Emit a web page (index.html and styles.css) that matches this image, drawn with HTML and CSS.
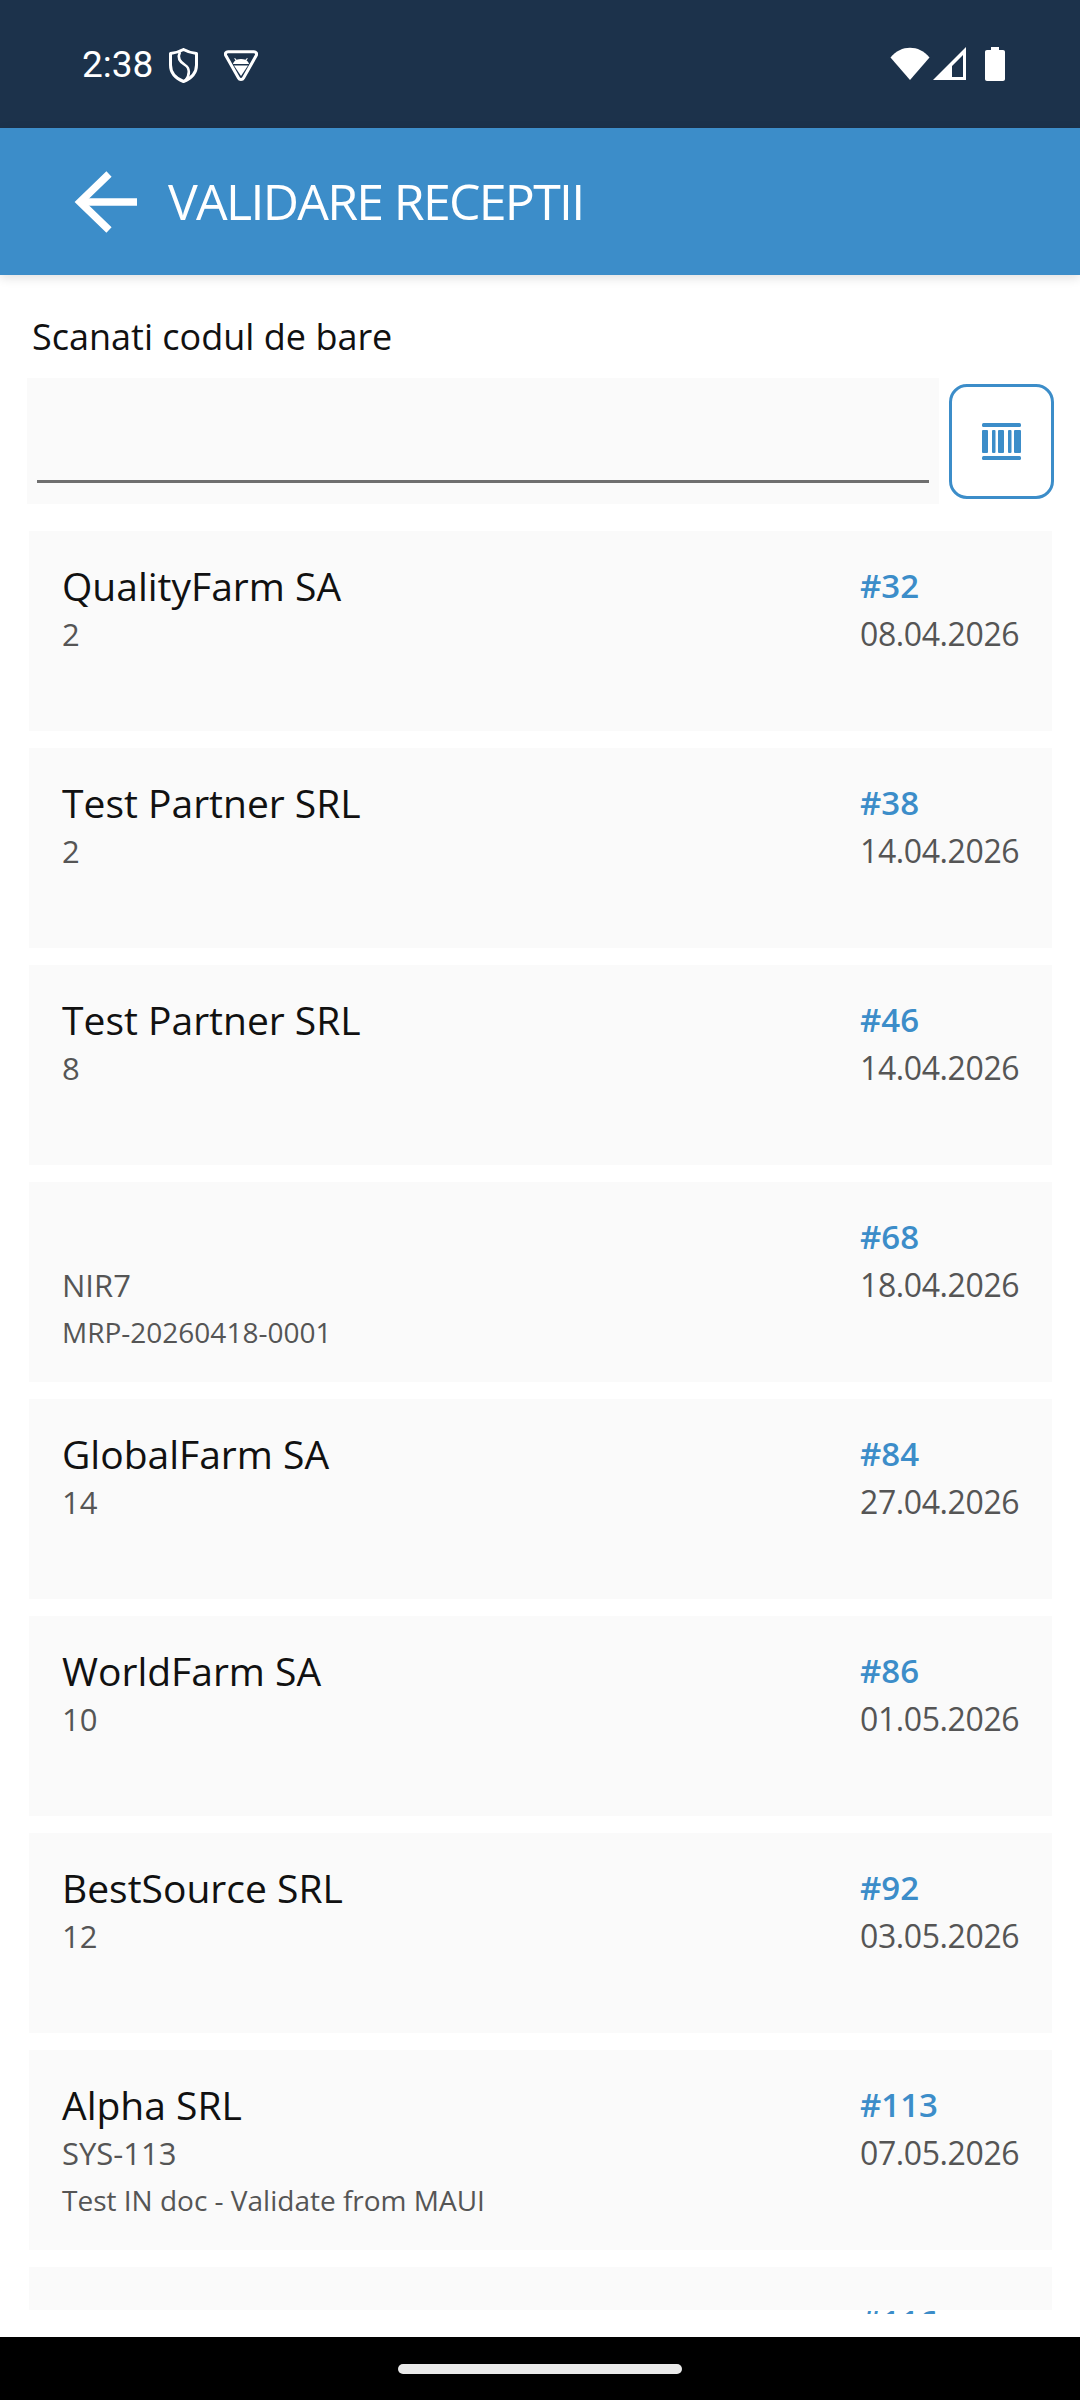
FILE: index.html
```html
<!DOCTYPE html>
<html lang="ro">

<head>
    <meta charset="UTF-8">
    <meta name="viewport" content="width=device-width, initial-scale=1.0">
    <title>Validare receptii</title>
    <link rel="stylesheet" href="styles.css">
</head>

<body>
    <div class="status-bar">
        <div class="status-left">
            <span class="status-time">2:38</span>
            <svg class="icon-shield" viewBox="0 0 29 35" fill="none" stroke="#fff" stroke-width="3" stroke-linejoin="round">
                <path d="M14.5 1.5 C18 3.5 23 5 27.5 5.5 V17 C27.5 25 22 30.5 14.5 33.5 C7 30.5 1.5 25 1.5 17 V5.5 C6 5 11 3.5 14.5 1.5 Z" />
                <path d="M11 4 C8 10 11 14 16 17 C21 20 21 27 16.5 32.5" stroke-width="2.6" />
            </svg>
            <svg class="icon-android" viewBox="0 0 34 31" fill="none">
                <path d="M4 1.7 H30 C32 1.7 33.2 3.5 32.2 5.5 L19.5 28 C18.5 30 15.5 30 14.5 28 L1.8 5.5 C0.8 3.5 2 1.7 4 1.7 Z" stroke="#fff" stroke-width="3" />
                <path d="M11 8 L12.5 9.8 C15.5 8.6 18.5 8.6 21.5 9.8 L23 8 L23.8 8.6 L22.5 10.4 C24 11.4 24.8 12.6 25 14 H9 C9.2 12.6 10 11.4 11.5 10.4 L10.2 8.6 Z" fill="#fff" />
                <path d="M10 15.5 H24 L17 26 Z" fill="#fff" />
            </svg>
        </div>
        <div class="status-right">
            <svg class="icon-wifi" viewBox="0 0 40 33" fill="#fff">
                <path d="M0.5 10.5 C11 -2.5 29 -2.5 39.5 10.5 L20 33 Z" />
            </svg>
            <svg class="icon-signal" viewBox="0 0 33 33">
                <path fill="#fff" fill-rule="evenodd" d="M33 0 V33 H0 Z M30 8 L19 19 V30 H30 Z" />
            </svg>
            <svg class="icon-battery" viewBox="0 0 20 34" fill="#fff">
                <path d="M6 0 H14 V3 H18 C19.2 3 20 3.8 20 5 V32 C20 33.2 19.2 34 18 34 H2 C0.8 34 0 33.2 0 32 V5 C0 3.8 0.8 3 2 3 H6 Z" />
            </svg>
        </div>
    </div>

    <header class="app-bar">
        <svg class="icon-back" viewBox="0 0 63 62" fill="none" stroke="#fff" stroke-width="7.5">
            <path d="M63 31 H6" />
            <path d="M35 3 L6 31 L35 59" />
        </svg>
        <h1 class="app-title">VALIDARE RECEPTII</h1>
    </header>

    <main class="content">
        <label class="scan-label">Scanati codul de bare</label>
        <div class="scan-row">
            <div class="scan-input">
                <div class="scan-line"></div>
            </div>
            <button class="scan-button">
                <svg class="icon-barcode" viewBox="0 0 39 37" fill="#3c8dc9">
                    <rect x="0" y="0" width="39" height="4" rx="1.5" />
                    <rect x="0" y="7" width="6" height="23" rx="1" />
                    <rect x="10" y="7" width="3.5" height="23" rx="1" />
                    <rect x="16" y="7" width="6" height="23" rx="1" />
                    <rect x="26" y="7" width="3.5" height="23" rx="1" />
                    <rect x="32" y="7" width="7" height="23" rx="1" />
                    <rect x="0" y="33" width="39" height="4" rx="1.5" />
                </svg>
            </button>
        </div>

        <div class="doc-list">
            <div class="doc-card">
                <div class="doc-left">
                    <div class="doc-name">QualityFarm SA</div>
                    <div class="doc-code">2</div>
                </div>
                <div class="doc-right">
                    <div class="doc-number">#32</div>
                    <div class="doc-date">08.04.2026</div>
                </div>
            </div>
            <div class="doc-card">
                <div class="doc-left">
                    <div class="doc-name">Test Partner SRL</div>
                    <div class="doc-code">2</div>
                </div>
                <div class="doc-right">
                    <div class="doc-number">#38</div>
                    <div class="doc-date">14.04.2026</div>
                </div>
            </div>
            <div class="doc-card">
                <div class="doc-left">
                    <div class="doc-name">Test Partner SRL</div>
                    <div class="doc-code">8</div>
                </div>
                <div class="doc-right">
                    <div class="doc-number">#46</div>
                    <div class="doc-date">14.04.2026</div>
                </div>
            </div>
            <div class="doc-card">
                <div class="doc-left">
                    <div class="doc-name"></div>
                    <div class="doc-code">NIR7</div>
                    <div class="doc-note">MRP-20260418-0001</div>
                </div>
                <div class="doc-right">
                    <div class="doc-number">#68</div>
                    <div class="doc-date">18.04.2026</div>
                </div>
            </div>
            <div class="doc-card">
                <div class="doc-left">
                    <div class="doc-name">GlobalFarm SA</div>
                    <div class="doc-code">14</div>
                </div>
                <div class="doc-right">
                    <div class="doc-number">#84</div>
                    <div class="doc-date">27.04.2026</div>
                </div>
            </div>
            <div class="doc-card">
                <div class="doc-left">
                    <div class="doc-name">WorldFarm SA</div>
                    <div class="doc-code">10</div>
                </div>
                <div class="doc-right">
                    <div class="doc-number">#86</div>
                    <div class="doc-date">01.05.2026</div>
                </div>
            </div>
            <div class="doc-card">
                <div class="doc-left">
                    <div class="doc-name">BestSource SRL</div>
                    <div class="doc-code">12</div>
                </div>
                <div class="doc-right">
                    <div class="doc-number">#92</div>
                    <div class="doc-date">03.05.2026</div>
                </div>
            </div>
            <div class="doc-card">
                <div class="doc-left">
                    <div class="doc-name">Alpha SRL</div>
                    <div class="doc-code">SYS-113</div>
                    <div class="doc-note">Test IN doc - Validate from MAUI</div>
                </div>
                <div class="doc-right">
                    <div class="doc-number">#113</div>
                    <div class="doc-date">07.05.2026</div>
                </div>
            </div>
            <div class="doc-card doc-card-cut">
                <div class="doc-left"></div>
                <div class="doc-right">
                    <div class="doc-number">#116</div>
                </div>
            </div>
        </div>
    </main>

    <div class="nav-bar">
        <div class="home-pill"></div>
    </div>
</body>

</html>
```

FILE: styles.css
```css
:root {
    --blue: #3c8dc9;
    --navy: #1c324b;
    --card: #fafafa;
    --text: #111;
    --subtext: #555;
}

* {
    margin: 0;
    padding: 0;
    box-sizing: border-box;
}

body {
    width: 1080px;
    height: 2400px;
    display: flex;
    flex-direction: column;
    overflow: hidden;
    background: #fff;
    font-family: "Open Sans", "Noto Sans", sans-serif;
    color: var(--text);
}

.status-bar {
    height: 128px;
    flex-shrink: 0;
    display: flex;
    justify-content: space-between;
    align-items: flex-start;
    padding: 47px 75px 0 82px;
    background: var(--navy);
}

.status-left,
.status-right {
    display: flex;
    align-items: flex-start;
}

.status-time {
    font-family: Roboto, sans-serif;
    font-size: 37px;
    line-height: 34px;
    color: #fff;
    margin-top: 1px;
}

.icon-shield {
    width: 29px;
    height: 35px;
    margin: 1px 0 0 16px;
}

.icon-android {
    width: 34px;
    height: 31px;
    margin: 3px 0 0 26px;
}

.icon-wifi {
    width: 40px;
    height: 33px;
}

.icon-signal {
    width: 33px;
    height: 33px;
    margin-left: 3px;
}

.icon-battery {
    width: 20px;
    height: 34px;
    margin-left: 19px;
}

.app-bar {
    height: 147px;
    flex-shrink: 0;
    display: flex;
    align-items: center;
    padding-left: 74px;
    background: var(--blue);
    box-shadow: 0 3px 10px rgba(0, 0, 0, 0.12);
    position: relative;
}

.icon-back {
    width: 63px;
    height: 62px;
}

.app-title {
    margin-left: 31px;
    padding-bottom: 2px;
    font-size: 50px;
    font-weight: 500;
    letter-spacing: -1.7px;
    color: #fff;
    white-space: nowrap;
}

.content {
    flex: 1;
    min-height: 0;
    display: flex;
    flex-direction: column;
}

.scan-label {
    display: block;
    height: 103px;
    padding: 39px 0 0 32px;
    font-size: 36px;
    line-height: 46px;
}

.scan-row {
    height: 126px;
    display: flex;
    align-items: center;
    padding-left: 27px;
}

.scan-input {
    width: 912px;
    height: 126px;
    padding: 102px 10px 0;
    background: var(--card);
}

.scan-line {
    height: 3px;
    background: #6f6f6f;
}

.scan-button {
    width: 105px;
    height: 115px;
    margin-left: 10px;
    display: flex;
    align-items: center;
    justify-content: center;
    background: #fff;
    border: 3px solid var(--blue);
    border-radius: 18px;
}

.icon-barcode {
    width: 39px;
    height: 37px;
}

.doc-list {
    margin-top: 27px;
    height: 1783px;
    padding: 0 28px 0 29px;
    overflow: hidden;
}

.doc-card {
    height: 200px;
    margin-bottom: 17px;
    padding: 31px 33px 0 33px;
    display: flex;
    justify-content: space-between;
    background: var(--card);
}

.doc-card-cut {
    height: 43px;
    margin-bottom: 0;
}

.doc-name,
.doc-number,
.doc-code,
.doc-date {
    height: 48px;
    line-height: 48px;
    white-space: nowrap;
}

.doc-note {
    height: 47px;
    line-height: 47px;
    white-space: nowrap;
}

.doc-name {
    font-size: 39px;
    font-weight: 500;
    color: var(--text);
}

.doc-code {
    font-size: 31px;
    color: var(--subtext);
}

.doc-date {
    font-size: 32px;
    letter-spacing: -0.4px;
    color: var(--subtext);
}

.doc-note {
    font-size: 28px;
    color: var(--subtext);
}

.doc-number {
    font-size: 33px;
    font-weight: 600;
    color: var(--blue);
}

.doc-right {
    width: 159px;
}

.nav-bar {
    height: 63px;
    flex-shrink: 0;
    display: flex;
    justify-content: center;
    padding-top: 27px;
    background: #000;
}

.home-pill {
    width: 284px;
    height: 10px;
    border-radius: 5px;
    background: #eaeaea;
}
```
